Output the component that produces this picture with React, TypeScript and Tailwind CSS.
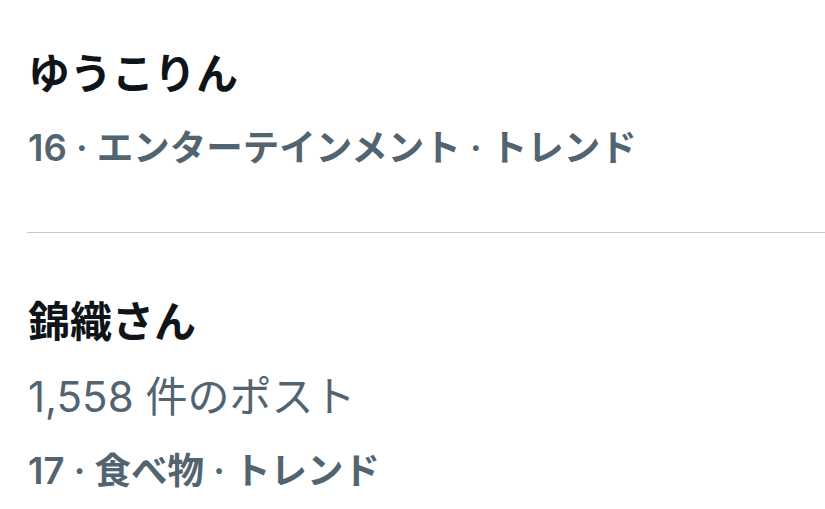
import React from "react";

const font = { fontFamily: 'Inter, "Noto Sans CJK JP", sans-serif' };

export default function App() {
  return (
    <div className="w-[825px] h-[509px] bg-white overflow-hidden" style={font}>
      <div className="pl-[28px] pt-[36px] pb-[46px]">
        <div className="h-[75px] flex items-center text-[42px] font-bold text-[#0f1419] leading-none">ゆうこりん</div>
        <div className="h-[75px] flex items-center text-[36.5px] font-semibold text-[#536471] leading-none">16 · エンターテインメント · トレンド</div>
      </div>
      <div className="ml-[27px] h-px bg-[#c9c9c9]" />
      <div className="pl-[28px] pt-[51px]">
        <div className="h-[75px] flex items-center text-[42px] font-bold text-[#0f1419] leading-none">錦織さん</div>
        <div className="h-[75px] flex items-center text-[42px] font-normal text-[#536471] leading-none">1,558 件のポスト</div>
        <div className="h-[75px] flex items-center text-[36.5px] font-semibold text-[#536471] leading-none">17 · 食べ物 · トレンド</div>
      </div>
    </div>
  );
}
